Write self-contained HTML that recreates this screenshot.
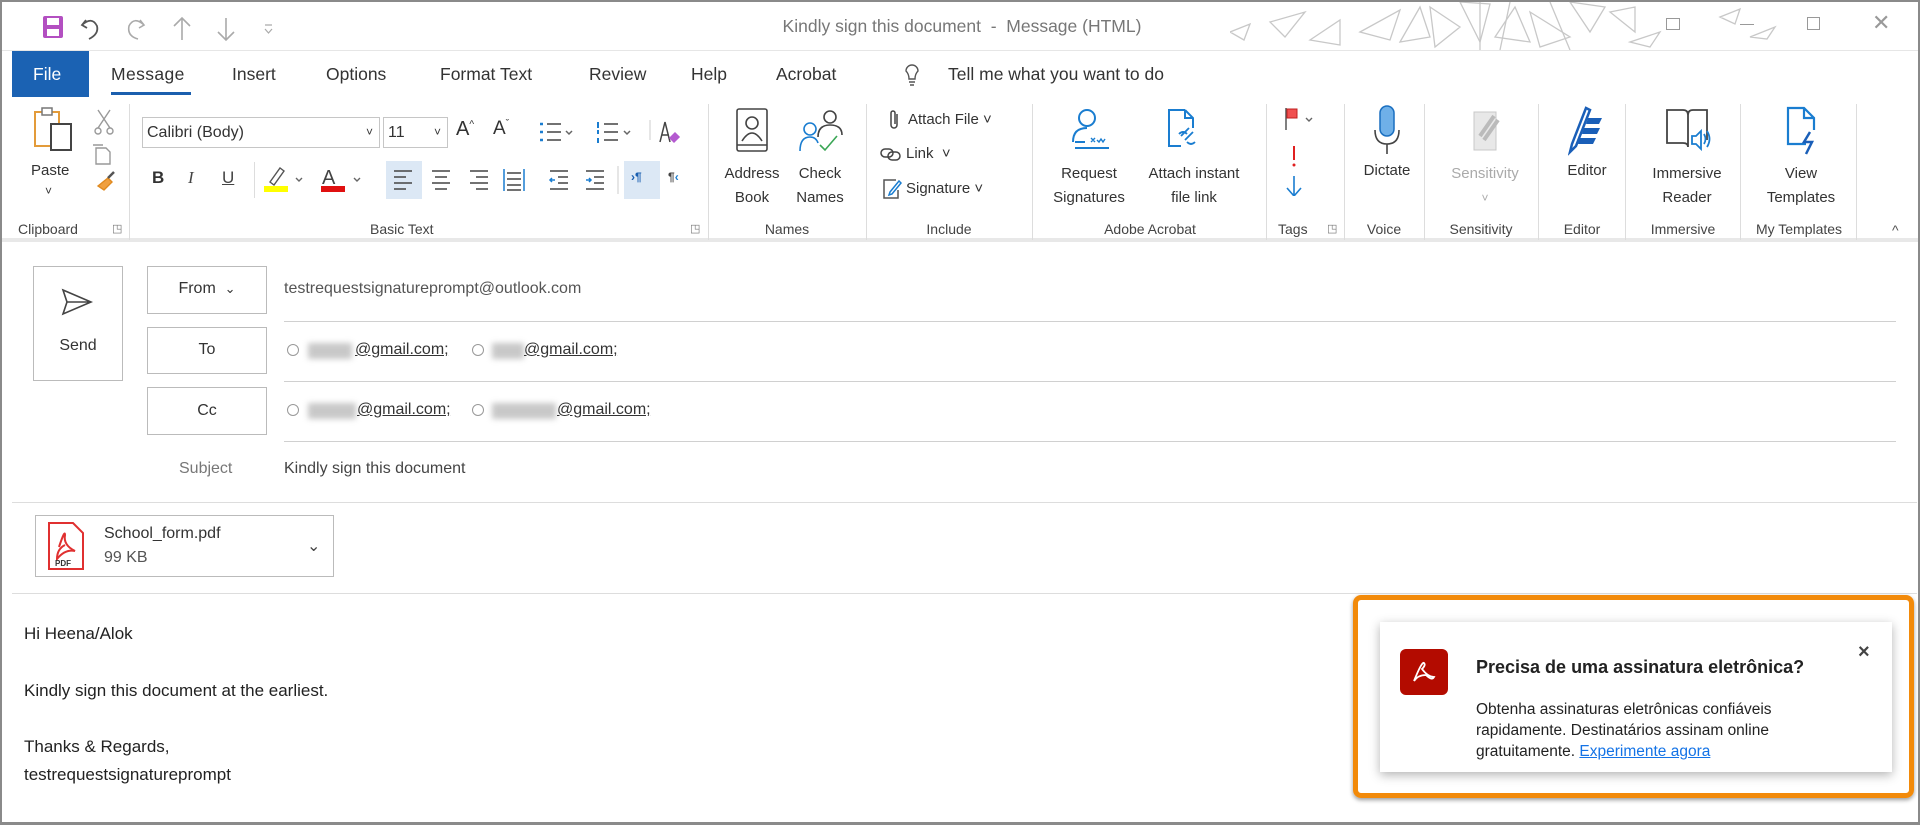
<!DOCTYPE html>
<html><head><meta charset="utf-8"><style>
*{margin:0;padding:0;box-sizing:border-box}
body{width:1920px;height:825px;overflow:hidden;background:#fff;font-family:"Liberation Sans",sans-serif;color:#333;position:relative}
.a{position:absolute;white-space:nowrap}
.c{transform:translateX(-50%);text-align:center}
.rb{font-size:15px;color:#333}
.lbl{font-size:14px;color:#444;top:221px}
.sep{position:absolute;top:104px;width:1px;height:136px;background:#ddd}
.tab{position:absolute;top:64px;font-size:17.5px;color:#333}
.fl{position:absolute;left:284px;width:1612px;height:1px;background:#d0d0d0}
.box{position:absolute;border:1px solid #bbb;background:#fff;font-size:16px;color:#333;text-align:center}
.rad{position:absolute;width:12px;height:12px;border:1px solid #999;border-radius:50%}
.blur{position:absolute;height:16px;background:#c8c8c8;filter:blur(3px)}
.ml{position:absolute;font-size:16px;color:#333;text-decoration:underline}
.bt{font-size:17px;color:#222;position:absolute;left:24px}
</style></head><body>
<div style="position:absolute;inset:0;border:2px solid #8a8a8a;border-bottom-width:3px;pointer-events:none;z-index:5"></div>

<!-- title bar -->
<svg class="a" style="left:40px;top:12px" width="260" height="32" viewBox="0 0 260 32">
<rect x="3" y="4" width="20" height="22" rx="2" fill="#b34fc1"/><rect x="7" y="6" width="12" height="7" fill="#fff"/><rect x="7" y="17" width="12" height="7" fill="#fff"/>
<path d="M46 8 l-4 5 5 3 M42 13 q10 -9 15 1 q2 8 -8 13" fill="none" stroke="#555" stroke-width="1.8"/>
<path d="M100 8 l4 5 -5 3 M104 13 q-10 -9 -15 1 q-2 10 9 13" fill="none" stroke="#aaa" stroke-width="1.6"/>
<path d="M142 28 V6 M134 14 l8 -8 8 8" fill="none" stroke="#aaa" stroke-width="1.6"/>
<path d="M186 6 V28 M178 20 l8 8 8 -8" fill="none" stroke="#aaa" stroke-width="1.6"/>
<path d="M225 13 h7 M225 17 l3.5 4 3.5 -4" fill="none" stroke="#aaa" stroke-width="1.2"/>
</svg>
<div class="a c" style="left:962px;top:16px;font-size:17.5px;color:#777">Kindly sign this document&nbsp; - &nbsp;Message (HTML)</div>
<svg class="a" style="left:1230px;top:2px" width="680" height="48" viewBox="0 0 680 48" fill="none" stroke="#c8c8c8" stroke-width="1.3">
<path d="M0 30 l20 -8 -6 16 z M40 20 l35 -10 -20 25 z M80 38 l30 -20 0 25z M130 30 l40 -22 -10 30 z M170 40 l20 -35 10 30 z M200 5 l30 20 -25 20 z M230 0 l20 40 10 -38 z M265 35 l20 -30 15 35z M300 10 l40 25 -30 10z M340 0 l20 30 15 -25z M380 10 l25 20 0 -25z M400 40 l30 -10 -10 15z M490 15 l20 -8 -5 15z M520 35 l25 -10 -8 12z"/>
<path d="M250 0 l0 48 M280 0 l-10 48 M320 0 l20 48"/>
</svg>
<div class="a" style="left:1666px;top:18px;width:14px;height:12px;border:1px solid #999"></div>
<div class="a" style="left:1740px;top:24px;width:14px;height:1px;background:#999"></div>
<div class="a" style="left:1807px;top:17px;width:13px;height:13px;border:1px solid #999"></div>
<div class="a" style="left:1872px;top:10px;font-size:22px;color:#999">✕</div>

<!-- tabs -->
<div class="a" style="left:0;top:50px;width:1920px;height:1px;background:#e6e6e6"></div>
<div class="a" style="left:12px;top:51px;width:77px;height:46px;background:#1b62b3"></div>
<div class="tab" style="left:33px;color:#fff">File</div>
<div class="tab" style="left:111px;letter-spacing:.4px">Message</div>
<div class="a" style="left:111px;top:92px;width:80px;height:3px;background:#1b5fae"></div>
<div class="tab" style="left:232px">Insert</div>
<div class="tab" style="left:326px">Options</div>
<div class="tab" style="left:440px">Format Text</div>
<div class="tab" style="left:589px">Review</div>
<div class="tab" style="left:691px">Help</div>
<div class="tab" style="left:776px">Acrobat</div>
<svg class="a" style="left:904px;top:62px" width="16" height="24" viewBox="0 0 16 24" fill="none" stroke="#555" stroke-width="1.4"><path d="M5 17 q0 -5 -3 -8 a6 6 0 1 1 12 0 q-3 3 -3 8 z M5 20 h6 M6 23 h4"/></svg>
<div class="tab" style="left:948px">Tell me what you want to do</div>

<!-- ribbon -->
<div class="a" style="left:0;top:238px;width:1920px;height:4px;background:#e8e8e8"></div>
<!-- clipboard -->
<svg class="a" style="left:32px;top:106px" width="50" height="50" viewBox="0 0 50 50"><rect x="3" y="6" width="24" height="34" fill="none" stroke="#e39b3a" stroke-width="2"/><rect x="10" y="2" width="10" height="7" fill="#fff" stroke="#777" stroke-width="1.5"/><rect x="19" y="18" width="20" height="26" fill="#fff" stroke="#444" stroke-width="2"/></svg>
<div class="a rb" style="left:31px;top:162px">Paste</div>
<div class="a rb" style="left:45px;top:184px;font-size:12px">˅</div>
<svg class="a" style="left:90px;top:108px" width="30" height="90" viewBox="0 0 30 90" fill="none" stroke="#999" stroke-width="1.4"><path d="M8 2 l12 18 M20 2 l-12 18"/><circle cx="8" cy="23" r="3"/><circle cx="20" cy="23" r="3"/><path d="M6 40 h10 l4 4 v12 h-14z M3 37 h10"/><path d="M8 78 l10 -8 l4 4 l-8 8 z" fill="#f0a040" stroke="#e08a20"/><path d="M18 70 l6 -6" stroke="#555" stroke-width="2.5"/></svg>
<div class="a lbl" style="left:18px">Clipboard</div>
<div class="a" style="left:112px;top:222px;font-size:11px;color:#777">◳</div>
<div class="sep" style="left:129px"></div>
<!-- basic text -->
<div class="a" style="left:142px;top:117px;width:238px;height:31px;border:1px solid #c6c6c6;font-size:16px;padding:6px 4px;color:#333">Calibri (Body)<span style="position:absolute;right:6px;top:7px;font-size:12px">˅</span></div>
<div class="a" style="left:383px;top:117px;width:65px;height:31px;border:1px solid #c6c6c6;font-size:16px;padding:6px 4px;color:#333">11<span style="position:absolute;right:6px;top:7px;font-size:12px">˅</span></div>
<div class="a rb" style="left:456px;top:118px;font-size:20px">A<sup style="font-size:10px">^</sup></div>
<div class="a rb" style="left:493px;top:118px;font-size:19px">A<sup style="font-size:10px">ˇ</sup></div>
<svg class="a" style="left:538px;top:118px" width="160" height="28" viewBox="0 0 160 28" stroke-width="1.5" fill="none"><path d="M2 6 h3 M2 14 h3 M2 22 h3" stroke="#1a7dd0" stroke-width="2.5"/><path d="M9 6 h14 M9 14 h14 M9 22 h14" stroke="#444"/><path d="M28 13 l3 3 3 -3" stroke="#666"/><path d="M60 4 v6 M60 12 v4 M60 20 v5" stroke="#1a7dd0" stroke-width="2"/><path d="M66 6 h14 M66 14 h14 M66 22 h14" stroke="#444"/><path d="M86 13 l3 3 3 -3" stroke="#666"/><path d="M112 2 v20" stroke="#ddd"/><path d="M122 24 l5 -20 5 20 M124 17 h7" stroke="#444"/><path d="M132 20 l5 -5 4 4 -5 5z" fill="#b45ad0" stroke="#b45ad0"/></svg>
<div class="a" style="left:152px;top:168px;font-size:17px;font-weight:bold;color:#333">B</div>
<div class="a" style="left:188px;top:168px;font-size:17px;font-style:italic;font-family:'Liberation Serif',serif;color:#444">I</div>
<div class="a" style="left:222px;top:168px;font-size:17px;text-decoration:underline;color:#444">U</div>
<div class="a" style="left:254px;top:162px;width:1px;height:36px;background:#ddd"></div>
<svg class="a" style="left:262px;top:164px" width="130" height="30" viewBox="0 0 130 30"><path d="M8 18 l10 -14 4 3 -10 14 z" fill="none" stroke="#555" stroke-width="1.4"/><rect x="2" y="22" width="24" height="6" fill="#ffff00"/><path d="M34 14 l3 3 3 -3" stroke="#666" fill="none" stroke-width="1.4"/><text x="60" y="20" font-size="20" fill="#444" font-family="Liberation Sans">A</text><rect x="59" y="22" width="24" height="6" fill="#e01010"/><path d="M92 14 l3 3 3 -3" stroke="#666" fill="none" stroke-width="1.4"/></svg>
<div class="a" style="left:386px;top:161px;width:36px;height:38px;background:#dce8f5"></div>
<svg class="a" style="left:390px;top:166px" width="300" height="28" viewBox="0 0 300 28" fill="none" stroke="#444" stroke-width="1.5"><path d="M4 5 h18 M4 11 h12 M4 17 h18 M4 23 h12"/><path d="M42 5 h18 M45 11 h12 M42 17 h18 M45 23 h12"/><path d="M80 5 h18 M86 11 h12 M80 17 h18 M86 23 h12"/><path d="M114 3 v22 M134 3 v22" stroke="#1a7dd0"/><path d="M117 7 h14 M117 13 h14 M117 19 h14 M117 24 h14"/><path d="M160 5 h18 M168 11 h10 M168 17 h10 M160 23 h18"/><path d="M160 14 h5 M162 12 l-2 2 2 2" stroke="#1a7dd0"/><path d="M196 5 h18 M204 11 h10 M204 17 h10 M196 23 h18"/><path d="M196 14 h5 M199 12 l2 2 -2 2" stroke="#1a7dd0"/><path d="M228 0 v28" stroke="#ddd"/></svg>
<div class="a" style="left:624px;top:161px;width:36px;height:38px;background:#dce8f5"></div>
<div class="a" style="left:631px;top:170px;font-size:12px;color:#1a5fb0;font-weight:bold">›¶</div>
<div class="a" style="left:668px;top:170px;font-size:12px;color:#444;font-weight:bold">¶<span style="color:#1a7dd0">‹</span></div>
<div class="a lbl" style="left:370px">Basic Text</div>
<div class="a" style="left:690px;top:222px;font-size:11px;color:#777">◳</div>
<div class="sep" style="left:708px"></div>
<!-- names -->
<svg class="a" style="left:734px;top:107px" width="110" height="48" viewBox="0 0 110 48" fill="none" stroke-width="1.6"><rect x="3" y="2" width="30" height="42" rx="2" stroke="#444"/><circle cx="18" cy="16" r="6" stroke="#444"/><path d="M8 34 q10 -16 20 0 M3 38 h30" stroke="#444"/><circle cx="96" cy="10" r="6" stroke="#444"/><path d="M84 30 q0 -12 12 -12 q12 0 12 10" stroke="#444"/><circle cx="76" cy="22" r="6" stroke="#1a7dd0"/><path d="M66 44 q0 -14 10 -14 q6 0 8 6" stroke="#1a7dd0"/><path d="M86 38 l5 5 12 -14" stroke="#3aa655"/></svg>
<div class="a rb c" style="left:752px;top:162px;line-height:24px">Address<br>Book</div>
<div class="a rb c" style="left:820px;top:162px;line-height:24px">Check<br>Names</div>
<div class="a lbl c" style="left:787px">Names</div>
<div class="sep" style="left:866px"></div>
<!-- include -->
<svg class="a" style="left:886px;top:108px" width="16" height="24" viewBox="0 0 16 24" fill="none" stroke="#444" stroke-width="1.5"><path d="M11 6 v11 a3 3 0 0 1 -6 0 v-12 a2 2 0 0 1 4 0 v11"/></svg>
<div class="a rb" style="left:908px;top:111px">Attach File ˅</div>
<svg class="a" style="left:880px;top:146px" width="22" height="16" viewBox="0 0 22 16" fill="none" stroke="#444" stroke-width="1.5"><rect x="1" y="3" width="12" height="8" rx="4"/><rect x="8" y="6" width="12" height="8" rx="4"/></svg>
<div class="a rb" style="left:906px;top:145px">Link &nbsp;˅</div>
<svg class="a" style="left:882px;top:178px" width="20" height="22" viewBox="0 0 20 22" fill="none" stroke-width="1.5"><path d="M14 2 h-12 v18 h14 v-8" stroke="#555"/><path d="M8 14 l9 -11 2 2 -9 11 -3 1z" stroke="#1a7dd0"/></svg>
<div class="a rb" style="left:906px;top:180px">Signature ˅</div>
<div class="a lbl c" style="left:949px">Include</div>
<div class="sep" style="left:1032px"></div>
<!-- acrobat -->
<svg class="a" style="left:1065px;top:106px" width="150" height="50" viewBox="0 0 150 50" fill="none" stroke="#1a7dd0" stroke-width="2"><circle cx="22" cy="12" r="8"/><path d="M8 36 q0 -14 14 -14 M10 36 h10"/><path d="M26 32 l4 4 M30 32 l-4 4 M32 34 l2 2 2-3 2 3 2-3" stroke-width="1.4"/><path d="M10 42 h34"/><path d="M120 4 h-16 v36 h12 M120 4 l8 8 v10 M120 4 v8 h8"/><path d="M116 30 l8 -8 M120 34 l8 -8 M114 28 q4 -4 8 0 M122 36 q4 4 8 0" stroke-width="1.8"/></svg>
<div class="a rb c" style="left:1089px;top:162px;line-height:24px">Request<br>Signatures</div>
<div class="a rb c" style="left:1194px;top:162px;line-height:24px">Attach instant<br>file link</div>
<div class="a lbl c" style="left:1150px">Adobe Acrobat</div>
<div class="sep" style="left:1266px"></div>
<!-- tags -->
<svg class="a" style="left:1282px;top:106px" width="40" height="90" viewBox="0 0 40 90"><path d="M4 2 v22" stroke="#555" stroke-width="1.5"/><rect x="5" y="3" width="10" height="9" fill="#f05050" stroke="#c02020"/><path d="M24 12 l3 3 3 -3" stroke="#666" fill="none" stroke-width="1.4"/><path d="M12 40 v14" stroke="#e02020" stroke-width="2"/><circle cx="12" cy="59" r="1.5" fill="#e02020"/><path d="M12 70 v20 M5 82 l7 8 7 -8" stroke="#1a7dd0" stroke-width="1.6" fill="none"/></svg>
<div class="a lbl" style="left:1278px">Tags</div>
<div class="a" style="left:1327px;top:222px;font-size:11px;color:#777">◳</div>
<div class="sep" style="left:1344px"></div>
<!-- voice -->
<svg class="a" style="left:1372px;top:104px" width="30" height="52" viewBox="0 0 30 52"><rect x="8" y="2" width="14" height="30" rx="7" fill="#6fb0e8" stroke="#1a6fc0" stroke-width="1.5"/><path d="M3 26 q0 14 12 14 q12 0 12 -14 M15 40 v10" fill="none" stroke="#444" stroke-width="1.6"/></svg>
<div class="a rb c" style="left:1387px;top:162px">Dictate</div>
<div class="a lbl c" style="left:1384px">Voice</div>
<div class="sep" style="left:1424px"></div>
<!-- sensitivity -->
<svg class="a" style="left:1470px;top:106px" width="34" height="48" viewBox="0 0 34 48"><rect x="4" y="6" width="22" height="38" fill="#e8e8e8" stroke="#c8c8c8"/><path d="M10 30 l14 -20 M14 34 l14 -20" stroke="#bbb" stroke-width="4"/></svg>
<div class="a rb c" style="left:1485px;top:162px;color:#aaa;line-height:24px">Sensitivity<br><span style="font-size:12px">˅</span></div>
<div class="a lbl c" style="left:1481px">Sensitivity</div>
<div class="sep" style="left:1538px"></div>
<!-- editor -->
<svg class="a" style="left:1568px;top:104px" width="40" height="52" viewBox="0 0 40 52"><path d="M18 4 l-14 36 -2 8 6 -6 14 -36z" fill="none" stroke="#1a5fb8" stroke-width="2.5"/><path d="M20 14 h14 l-3 6 h-13z M16 24 h16 l-3 6 h-15z M12 34 h16 l-3 6 h-15z" fill="#1a5fb8"/></svg>
<div class="a rb c" style="left:1587px;top:162px">Editor</div>
<div class="a lbl c" style="left:1582px">Editor</div>
<div class="sep" style="left:1625px"></div>
<!-- immersive -->
<svg class="a" style="left:1664px;top:106px" width="48" height="48" viewBox="0 0 48 48" fill="none" stroke-width="1.8"><path d="M3 4 h16 q5 0 5 5 v32 q0 -4 -5 -4 h-16z M24 9 q0 -5 5 -5 h14 v30" stroke="#444"/><path d="M28 30 h4 l5 -5 v18 l-5 -5 h-4z M40 28 q3 5 0 10 M43 25 q5 8 0 16" stroke="#1a7dd0"/></svg>
<div class="a rb c" style="left:1687px;top:162px;line-height:24px">Immersive<br>Reader</div>
<div class="a lbl c" style="left:1683px">Immersive</div>
<div class="sep" style="left:1740px"></div>
<!-- templates -->
<svg class="a" style="left:1784px;top:104px" width="36" height="52" viewBox="0 0 36 52" fill="none" stroke="#1a7dd0" stroke-width="2.2"><path d="M22 40 h-18 v-36 h16 l10 10 v12 M20 4 v10 h10"/><path d="M26 28 l-6 10 h8 l-6 12" stroke-width="2.5" stroke="#1a5fb8"/></svg>
<div class="a rb c" style="left:1801px;top:162px;line-height:24px">View<br>Templates</div>
<div class="a lbl c" style="left:1799px">My Templates</div>
<div class="sep" style="left:1856px"></div>
<div class="a" style="left:1892px;top:222px;font-size:14px;color:#555">^</div>

<!-- header fields -->
<div class="box" style="left:33px;top:266px;width:90px;height:115px"></div>
<svg class="a" style="left:61px;top:287px" width="34" height="30" viewBox="0 0 34 30"><path d="M2 3 l28 12 -28 12 4 -12z M6 15 h24" fill="none" stroke="#444" stroke-width="1.6"/></svg>
<div class="a c" style="left:78px;top:337px;font-size:16px;color:#333">Send</div>
<div class="box" style="left:147px;top:266px;width:120px;height:48px;padding-top:13px">From &nbsp;<span style="font-size:13px">⌄</span></div>
<div class="box" style="left:147px;top:327px;width:120px;height:47px;padding-top:13px">To</div>
<div class="box" style="left:147px;top:387px;width:120px;height:48px;padding-top:14px">Cc</div>
<div class="a" style="left:284px;top:280px;font-size:16px;color:#555">testrequestsignatureprompt@outlook.com</div>
<div class="fl" style="top:321px"></div>
<div class="rad" style="left:287px;top:344px"></div><div class="blur" style="left:308px;top:343px;width:44px"></div><div class="ml" style="left:355px;top:341px">@gmail.com;</div>
<div class="rad" style="left:472px;top:344px"></div><div class="blur" style="left:492px;top:343px;width:32px"></div><div class="ml" style="left:524px;top:341px">@gmail.com;</div>
<div class="fl" style="top:381px"></div>
<div class="rad" style="left:287px;top:404px"></div><div class="blur" style="left:308px;top:403px;width:48px"></div><div class="ml" style="left:357px;top:401px">@gmail.com;</div>
<div class="rad" style="left:472px;top:404px"></div><div class="blur" style="left:492px;top:403px;width:64px"></div><div class="ml" style="left:557px;top:401px">@gmail.com;</div>
<div class="fl" style="top:441px"></div>
<div class="a" style="left:179px;top:460px;font-size:16px;color:#777">Subject</div>
<div class="a" style="left:284px;top:460px;font-size:16px;color:#444">Kindly sign this document</div>
<div class="a" style="left:12px;top:502px;width:1905px;height:1px;background:#ddd"></div>
<!-- attachment -->
<div class="box" style="left:35px;top:515px;width:299px;height:62px"></div>
<svg class="a" style="left:47px;top:521px" width="38" height="50" viewBox="0 0 38 50"><path d="M2 2 h24 l10 10 v36 h-34z" fill="#fff" stroke="#e03030" stroke-width="2"/><path d="M12 26 q6 -18 6 -12 q-2 10 10 16 q-10 -2 -18 8 q0 -10 8 -14" fill="none" stroke="#e03030" stroke-width="2"/><text x="8" y="45" font-size="8" font-weight="bold" fill="#333" font-family="Liberation Sans">PDF</text></svg>
<div class="a" style="left:104px;top:525px;font-size:16px;color:#333">School_form.pdf</div>
<div class="a" style="left:104px;top:549px;font-size:16px;color:#555">99 KB</div>
<div class="a" style="left:307px;top:536px;font-size:16px;color:#444">⌄</div>
<div class="a" style="left:12px;top:593px;width:1905px;height:1px;background:#ddd"></div>

<!-- body -->
<div class="bt" style="top:624px">Hi Heena/Alok</div>
<div class="bt" style="top:681px">Kindly sign this document at the earliest.</div>
<div class="bt" style="top:737px">Thanks &amp; Regards,</div>
<div class="bt" style="top:765px">testrequestsignatureprompt</div>

<!-- popup -->
<div class="a" style="left:1353px;top:595px;width:561px;height:203px;border:5px solid #f28a0a;border-radius:8px;box-shadow:0 2px 4px rgba(0,0,0,.4)"></div>
<div class="a" style="left:1380px;top:622px;width:512px;height:150px;background:#fff;box-shadow:0 3px 10px rgba(0,0,0,.3)"></div>
<svg class="a" style="left:1400px;top:649px" width="48" height="46" viewBox="0 0 48 46"><rect width="48" height="46" rx="6" fill="#b30b00"/><path d="M14 32 q8 -20 10 -18 q2 2 -2 6 q6 8 12 8 q-2 4 -8 -2 q-8 0 -12 6z" fill="none" stroke="#fff" stroke-width="1.8"/></svg>
<div class="a" style="left:1476px;top:657px;font-size:18px;font-weight:bold;color:#222">Precisa de uma assinatura eletrônica?</div>
<div class="a" style="left:1858px;top:641px;font-size:20px;font-weight:bold;color:#444">×</div>
<div class="a" style="left:1476px;top:699px;font-size:15.5px;line-height:21px;color:#222">Obtenha assinaturas eletrônicas confiáveis<br>rapidamente. Destinatários assinam online<br>gratuitamente. <span style="color:#1473e6;text-decoration:underline">Experimente agora</span></div>
</body></html>
